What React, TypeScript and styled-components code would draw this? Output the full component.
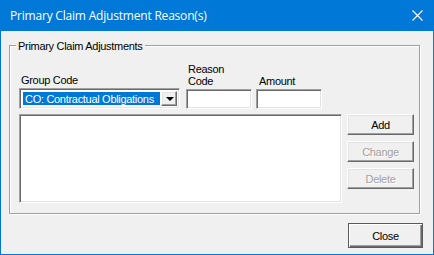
import React from "react";
import styled, { createGlobalStyle } from "styled-components";

const Global = createGlobalStyle`
  html, body { margin: 0; padding: 0; background: #f0f0f0; }
  * { box-sizing: border-box; }
`;

const Window = styled.div`
  width: 434px;
  height: 255px;
  background: #f0f0f0;
  border: 1px solid #0078d7;
  border-top: none;
  display: flex;
  flex-direction: column;
  font-family: "Liberation Sans", Arial, sans-serif;
  font-size: 11px;
  letter-spacing: -0.3px;
  color: #000;
`;

const TitleBar = styled.div`
  height: 31px;
  flex: none;
  background: #0078d7;
  color: #fff;
  display: flex;
  align-items: center;
  justify-content: space-between;
  padding: 0 9px 0 9px;
  margin: 0 -1px;
  padding-left: 10px;
  padding-right: 11px;
  font-family: "Open Sans", "Noto Sans", sans-serif;
  font-size: 12px;
  letter-spacing: -0.2px;
`;

const TitleText = styled.span`
  padding-bottom: 1px;
`;

const CloseGlyph = styled.svg`
  width: 11px;
  height: 11px;
  display: block;
`;

const Body = styled.div`
  flex: 1;
  display: flex;
  flex-direction: column;
  padding: 14px 10px 0 8px;
`;

const GroupBox = styled.div`
  position: relative;
  width: 411px;
  height: 169px;
  border: 1px solid #a0a0a0;
  box-shadow: inset 1px 1px 0 #fff, 1px 1px 0 #fff;
  padding: 17px 0 0 9px;
  display: flex;
  flex-direction: column;
`;

const Legend = styled.span`
  position: absolute;
  top: -6px;
  left: 6px;
  padding: 0 2px;
  line-height: 13px;
  background: #f0f0f0;
`;

const FieldRow = styled.div`
  display: flex;
  align-items: flex-end;
`;

const Field = styled.div<{ $gap?: number }>`
  display: flex;
  flex-direction: column;
  margin-left: ${(p) => p.$gap ?? 0}px;
`;

const Label = styled.span<{ $indent?: number }>`
  line-height: 12px;
  padding-left: ${(p) => p.$indent ?? 2}px;
  margin-bottom: 2px;
`;

const sunken = `
  border-top: 1px solid #a0a0a0;
  border-left: 1px solid #a0a0a0;
  border-bottom: 1px solid #fff;
  border-right: 1px solid #fff;
  box-shadow: inset 1px 1px 0 #696969, inset -1px -1px 0 #e3e3e3;
  background: #fff;
`;

const TextInput = styled.div`
  ${sunken}
  width: 66px;
  height: 20px;
`;

const Combo = styled.div`
  ${sunken}
  width: 161px;
  height: 21px;
  padding: 2px;
  display: flex;
  align-items: stretch;
`;

const ComboValue = styled.div`
  flex: 1;
  margin: 1px 1px 1px 1px;
  background: #0078d7;
  color: #fff;
  line-height: 15px;
  padding-left: 2px;
  white-space: nowrap;
  overflow: hidden;
`;

const raised = `
  border-top: 1px solid #fff;
  border-left: 1px solid #fff;
  border-bottom: 1px solid #696969;
  border-right: 1px solid #696969;
  box-shadow: inset -1px -1px 0 #a0a0a0, inset 1px 1px 0 #e3e3e3;
  background: #f0f0f0;
`;

const DropButton = styled.div`
  ${raised}
  width: 16px;
  display: flex;
  align-items: center;
  justify-content: center;
`;

const Arrow = styled.div`
  width: 0;
  height: 0;
  border-left: 4px solid transparent;
  border-right: 4px solid transparent;
  border-top: 4px solid #000;
  margin-left: 1px;
`;

const ListRow = styled.div`
  display: flex;
  margin-top: 5px;
`;

const ListBox = styled.div`
  ${sunken}
  width: 323px;
  height: 89px;
`;

const ButtonColumn = styled.div`
  display: flex;
  flex-direction: column;
  gap: 6px;
  margin-left: 5px;
`;

const Button = styled.button<{ $disabled?: boolean }>`
  ${raised}
  width: 67px;
  height: 21px;
  padding: 0;
  font-family: inherit;
  font-size: 11px;
  letter-spacing: -0.3px;
  color: ${(p) => (p.$disabled ? "#a0a0a0" : "#000")};
  text-shadow: ${(p) => (p.$disabled ? "1px 1px 0 #fff" : "none")};
  border-radius: 0;
  outline: none;
`;

const Footer = styled.div`
  display: flex;
  justify-content: flex-end;
  margin-top: 9px;
`;

const DefaultButton = styled.button`
  width: 75px;
  height: 25px;
  padding: 0;
  border: 1px solid #5a5a5a;
  box-shadow: inset 1px 1px 0 #fff, inset -1px -1px 0 #696969, inset -2px -2px 0 #a0a0a0;
  background: #f0f0f0;
  font-family: inherit;
  font-size: 11px;
  letter-spacing: -0.3px;
  color: #000;
  border-radius: 0;
`;

export default function App() {
  return (
    <>
      <Global />
      <Window>
        <TitleBar>
          <TitleText>Primary Claim Adjustment Reason(s)</TitleText>
          <CloseGlyph viewBox="0 0 11 11">
            <path d="M0.5 0.5 L10.5 10.5 M10.5 0.5 L0.5 10.5" stroke="#fff" strokeWidth="1.1" fill="none" />
          </CloseGlyph>
        </TitleBar>
        <Body>
          <GroupBox>
            <Legend>Primary Claim Adjustments</Legend>
            <FieldRow>
              <Field>
                <Label>Group Code</Label>
                <Combo>
                  <ComboValue>CO: Contractual Obligations</ComboValue>
                  <DropButton>
                    <Arrow />
                  </DropButton>
                </Combo>
              </Field>
              <Field $gap={6}>
                <Label>
                  Reason
                  <br />
                  Code
                </Label>
                <TextInput />
              </Field>
              <Field $gap={4}>
                <Label $indent={3}>Amount</Label>
                <TextInput />
              </Field>
            </FieldRow>
            <ListRow>
              <ListBox />
              <ButtonColumn>
                <Button>Add</Button>
                <Button $disabled>Change</Button>
                <Button $disabled>Delete</Button>
              </ButtonColumn>
            </ListRow>
          </GroupBox>
          <Footer>
            <DefaultButton>Close</DefaultButton>
          </Footer>
        </Body>
      </Window>
    </>
  );
}
